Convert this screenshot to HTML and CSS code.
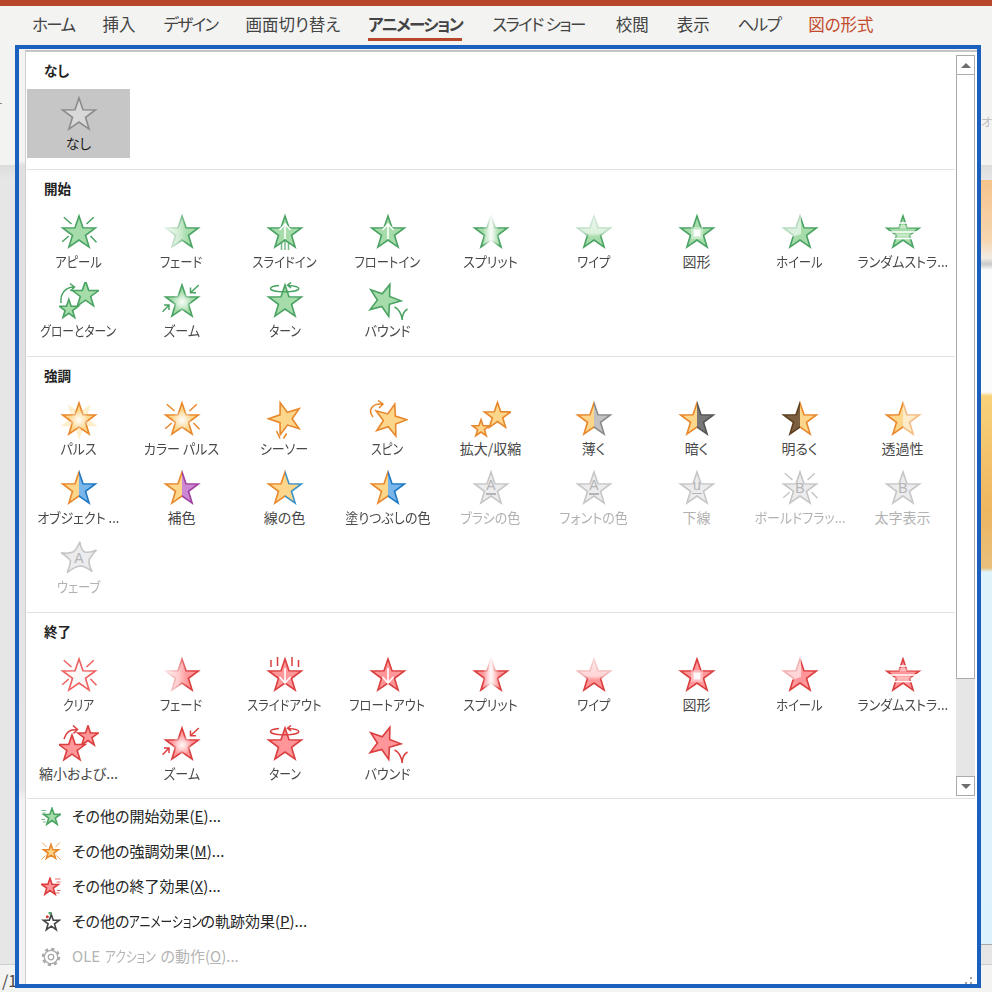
FILE: index.html
```html
<!DOCTYPE html>
<html lang="ja">
<head>
<meta charset="utf-8">
<title>アニメーション</title>
<link rel="stylesheet" href="styles.css">
</head>
<body>
<svg class="defs" aria-hidden="true">
  <defs>
    <polygon id="p" class="pt" points="20,3 24,14.7 36.4,14.9 26.5,22.3 30.1,34.1 20,27 9.900,34.1 13.500,22.3 3.600,14.9 16,14.7"/>
    <clipPath id="clipL"><rect x="0" y="0" width="20" height="40"/></clipPath>
    <clipPath id="clipR"><rect x="20" y="0" width="20" height="40"/></clipPath>
    <linearGradient id="gFade" gradientUnits="userSpaceOnUse" x1="3" y1="0" x2="25" y2="0">
      <stop offset="0" stop-color="#1e1e1e"/><stop offset=".6" stop-color="#777"/><stop offset="1" stop-color="#fff"/>
    </linearGradient>
    <linearGradient id="gSplit" gradientUnits="userSpaceOnUse" x1="12" y1="0" x2="28" y2="0">
      <stop offset="0" stop-color="#fff"/><stop offset=".45" stop-color="#1a1a1a"/><stop offset=".55" stop-color="#1a1a1a"/><stop offset="1" stop-color="#fff"/>
    </linearGradient>
    <linearGradient id="gWipe" gradientUnits="userSpaceOnUse" x1="0" y1="2" x2="0" y2="24">
      <stop offset="0" stop-color="#333"/><stop offset=".82" stop-color="#666"/><stop offset="1" stop-color="#fff"/>
    </linearGradient>
    <radialGradient id="gGlow">
      <stop offset="0" stop-color="#fff" stop-opacity=".95"/><stop offset=".4" stop-color="#fff" stop-opacity=".6"/><stop offset="1" stop-color="#fff" stop-opacity="0"/>
    </radialGradient>
    <mask id="mFade" maskUnits="userSpaceOnUse" x="0" y="0" width="40" height="40"><rect width="40" height="40" fill="url(#gFade)"/></mask>
    <mask id="mSplit" maskUnits="userSpaceOnUse" x="0" y="0" width="40" height="40"><rect width="40" height="40" fill="url(#gSplit)"/></mask>
    <mask id="mWipe" maskUnits="userSpaceOnUse" x="0" y="0" width="40" height="40"><rect width="40" height="40" fill="url(#gWipe)"/></mask>
    <mask id="mWheel" maskUnits="userSpaceOnUse" x="0" y="0" width="40" height="40"><rect width="40" height="40" fill="#fff"/><polygon points="21,21 21,0 0,0 0,28" fill="#666"/></mask>

    <symbol id="i-star" viewBox="0 0 40 40"><use href="#p" class="st"/></symbol>
    <symbol id="i-rays" viewBox="0 0 40 40"><use href="#p" class="st"/><path class="ln" d="M4.800,4.300L12.500,11M34.800,4.300L27.500,11M3.200,28.700L9.800,23M37.500,29.300L31.500,23"/></symbol>
    <symbol id="i-fade" viewBox="0 0 40 40"><g mask="url(#mFade)"><use href="#p" class="st"/></g></symbol>
    <symbol id="i-slidein" viewBox="0 0 40 40"><use href="#p" class="st"/><path class="wl" d="M20,26V11M14.500,17L20,11L25.500,17"/><path class="bar" d="M16.500,30V37M20,28V37M23.500,30V37"/></symbol>
    <symbol id="i-floatin" viewBox="0 0 40 40"><use href="#p" class="st"/><path class="wl" d="M20,26V11M14.500,17L20,11L25.500,17"/></symbol>
    <symbol id="i-split" viewBox="0 0 40 40"><g mask="url(#mSplit)"><use href="#p" class="st"/></g></symbol>
    <symbol id="i-wipe" viewBox="0 0 40 40"><g mask="url(#mWipe)"><use href="#p" class="st"/></g></symbol>
    <symbol id="i-shape" viewBox="0 0 40 40"><use href="#p" class="st"/><rect x="14" y="14" width="12" height="12" class="wa"/><rect x="16.500" y="16.500" width="7" height="7" class="wb"/></symbol>
    <symbol id="i-wheel" viewBox="0 0 40 40"><g mask="url(#mWheel)"><use href="#p" class="st"/></g></symbol>
    <symbol id="i-random" viewBox="0 0 40 40"><use href="#p" class="st"/><path class="wl2" d="M0,10H40M0,19H40M0,25.500H40"/><path class="wl3" d="M0,13.500H40M0,22.200H40"/></symbol>
    <symbol id="i-glowturn" viewBox="0 0 40 40"><use href="#p" class="st" transform="translate(26.500 13) scale(.8) translate(-20 -20.500)"/><use href="#p" class="st" transform="translate(9.800 27.500) scale(.58) translate(-20 -20.500)"/><path class="ln" d="M2,21C1,11 7,5 15,5M11,1.500L15.500,5L11.500,9"/></symbol>
    <symbol id="i-zoom" viewBox="0 0 40 40"><use href="#p" class="st"/><circle cx="20" cy="20" r="10" fill="url(#gGlow)"/><path class="ln" d="M36.800,3L28.500,10.700M28.500,5.500V10.700H34M0.500,29.700L7,23M2,23H7V28"/></symbol>
    <symbol id="i-turn" viewBox="0 0 40 40"><use href="#p" class="st"/><path class="ln" d="M14,3.500C8,4 5.500,5.200 5.500,6.500C5.500,8.400 12,9.800 19.600,9.800C27,9.800 33.800,8.400 33.800,6.500C33.800,5 30,3.800 23,3.400M26,0.500L22.500,3.300L26,6"/></symbol>
    <symbol id="i-bounce" viewBox="0 0 40 40"><use href="#p" class="st" transform="translate(16 18.500) rotate(20) scale(.98) translate(-20 -20.500)"/><path class="ln" d="M26.500,25Q33,28 34.200,38Q34.200,30 39.500,27"/></symbol>
    <symbol id="i-slideout" viewBox="0 0 40 40"><use href="#p" class="st"/><path class="wl" d="M20,12V27M14.500,21L20,27L25.500,21"/><path class="bar2" d="M6,4V11M12.500,1V10M27,1V10M33.500,4V11"/></symbol>
    <symbol id="i-floatout" viewBox="0 0 40 40"><use href="#p" class="st"/><path class="wl" d="M20,12V27M14.500,21L20,27L25.500,21"/></symbol>
    <symbol id="i-shrink" viewBox="0 0 40 40"><use href="#p" class="st" transform="translate(29 11.500) scale(.62) translate(-20 -20.500)"/><use href="#p" class="st" transform="translate(13 24) scale(.8) translate(-20 -20.500)"/><path class="ln" d="M5,14C7,7 11,4 18,5M14,0.500L18.500,4.500L14.500,8.500"/></symbol>

    <symbol id="i-pulse" viewBox="0 0 40 40"><use href="#p" class="halo" transform="translate(20 20.500) rotate(36) scale(1.14) translate(-20 -20.500)"/><use href="#p" class="st"/><circle cx="20" cy="20" r="10" fill="url(#gGlow)"/></symbol>
    <symbol id="i-cpulse" viewBox="0 0 40 40"><use href="#p" class="st"/><circle cx="20" cy="20" r="10" fill="url(#gGlow)"/><path class="ln" d="M4.800,4.300L12.500,11M34.800,4.300L27.500,11M3.200,28.700L9.800,23M37.500,29.300L31.500,23"/></symbol>
    <symbol id="i-teeter" viewBox="0 0 40 40"><use href="#p" class="st" transform="translate(20.500 19) rotate(-18) scale(.98) translate(-20 -20.500)"/><path class="ln" d="M11.500,31L15,38.500M21.500,33.500L18.500,38.500"/></symbol>
    <symbol id="i-spin" viewBox="0 0 40 40"><use href="#p" class="st" transform="translate(22 20.500) rotate(16) scale(.98) translate(-20 -20.500)"/><path class="ln" d="M5,17C-1,10 5,3 14,4M10,0.500L15,4L11,8"/></symbol>
    <symbol id="i-grow" viewBox="0 0 40 40"><use href="#p" class="st" transform="translate(26.500 16.400) scale(.8) translate(-20 -20.500)"/><use href="#p" class="st" transform="translate(10 28.700) scale(.52) translate(-20 -20.500)"/></symbol>
    <symbol id="i-half" viewBox="0 0 40 40"><g clip-path="url(#clipL)"><use href="#p" class="st"/></g><g clip-path="url(#clipR)"><use href="#p" class="st2"/></g></symbol>

    <symbol id="i-brush" viewBox="0 0 40 40"><use href="#p" class="st"/><text class="lt" x="20" y="21" text-anchor="middle">A</text><rect class="lb" x="15" y="24" width="10" height="2"/></symbol>
    <symbol id="i-under" viewBox="0 0 40 40"><use href="#p" class="st"/><text class="lt" x="20" y="21" text-anchor="middle">u</text><rect class="lb" x="15" y="24" width="10" height="1"/></symbol>
    <symbol id="i-bflash" viewBox="0 0 40 40"><use href="#p" class="st"/><text class="lt" x="20" y="24" text-anchor="middle">B</text><path class="ln" d="M4.800,4.300L12.500,11M34.800,4.300L27.500,11M3.200,28.700L9.800,23M37.500,29.300L31.500,23"/></symbol>
    <symbol id="i-bold" viewBox="0 0 40 40"><use href="#p" class="st"/><text class="lt" x="20" y="24" text-anchor="middle">B</text></symbol>
    <symbol id="i-wave" viewBox="0 0 40 40"><path class="st" d="M20.800,3.700Q22,13 26,14Q31,15 37.500,12Q32,18 30,22Q29.500,27 33.200,33.700Q26,28 21,28Q15,29 8.200,34.700Q11,28 11.500,23Q9,19 2.200,14.700Q9,16 14,14Q18,11 20.800,3.700Z"/><text class="lt" x="20" y="25" text-anchor="middle">A</text></symbol>

    <symbol id="i-m-entr" viewBox="0 0 40 40"><use href="#p" class="st" transform="translate(22 20.500) scale(1.02) translate(-20 -20.500)"/><path class="ln" d="M1,7H10M3,12H9M1,25H8M4,30H10"/></symbol>
    <symbol id="i-m-emph" viewBox="0 0 40 40"><use href="#p" class="st" transform="translate(20 20.500) scale(.9) translate(-20 -20.500)"/><path class="ln" d="M2,1L11,10M38,1L29,10M1,35L9,27M39,35L31,27"/></symbol>
    <symbol id="i-m-exit" viewBox="0 0 40 40"><use href="#p" class="st" transform="translate(18 20.500) scale(1.02) translate(-20 -20.500)"/><path class="ln" d="M28,4H39M31,10H39M32,27H39M29,32H37"/></symbol>
    <symbol id="i-m-path" viewBox="0 0 40 40"><use href="#p" class="st" transform="translate(20.600 22) scale(.98) translate(-20 -20.500)"/><circle cx="18" cy="2" r="3" class="dg"/><circle cx="12.600" cy="9.400" r="3" class="dr"/></symbol>
    <symbol id="i-gear" viewBox="0 0 40 40"><circle cx="20" cy="20" r="16" class="gt"/><circle cx="20" cy="20" r="13.500" class="gb"/><circle cx="20" cy="20" r="5.500" class="gh"/></symbol>
  </defs>
</svg>

<div class="accent"></div>
<nav class="tabs">
  <span class="tab kana">ホーム</span>
  <span class="tab">挿入</span>
  <span class="tab kana">デザイン</span>
  <span class="tab">画面切り替え</span>
  <span class="tab kana active">アニメーション</span>
  <span class="tab kana spaced">スライド ショー</span>
  <span class="tab">校閲</span>
  <span class="tab">表示</span>
  <span class="tab kana">ヘルプ</span>
  <span class="tab context">図の形式</span>
</nav>
<div class="ribbon"><span class="ribbon-tick"></span><span class="ribbon-cut">オ</span></div>
<div class="workspace"><div class="slide"></div></div>
<div class="status">/1</div>

<div class="frame">
  <div class="menu">
    <div class="gallery-row">
      <div class="gallery">
        <section class="group">
          <h3 class="group-title">なし</h3>
          <div class="grid">
            <div class="tile selected"><svg class="ico n"><use href="#i-star"/></svg><span class="label">なし</span></div>
          </div>
        </section>
        <section class="group">
          <h3 class="group-title">開始</h3>
          <div class="grid">
            <div class="tile"><svg class="ico g"><use href="#i-rays"/></svg><span class="label nar">アピール</span></div>
            <div class="tile"><svg class="ico g"><use href="#i-fade"/></svg><span class="label nar">フェード</span></div>
            <div class="tile"><svg class="ico g"><use href="#i-slidein"/></svg><span class="label nar">スライドイン</span></div>
            <div class="tile"><svg class="ico g"><use href="#i-floatin"/></svg><span class="label nar">フロートイン</span></div>
            <div class="tile"><svg class="ico g"><use href="#i-split"/></svg><span class="label wid">スプリット</span></div>
            <div class="tile"><svg class="ico g"><use href="#i-wipe"/></svg><span class="label nar">ワイプ</span></div>
            <div class="tile"><svg class="ico g"><use href="#i-shape"/></svg><span class="label">図形</span></div>
            <div class="tile"><svg class="ico g"><use href="#i-wheel"/></svg><span class="label nar">ホイール</span></div>
            <div class="tile"><svg class="ico g"><use href="#i-random"/></svg><span class="label wid">ランダムストラ...</span></div>
            <div class="tile"><svg class="ico g"><use href="#i-glowturn"/></svg><span class="label tig">グローとターン</span></div>
            <div class="tile"><svg class="ico g"><use href="#i-zoom"/></svg><span class="label wid">ズーム</span></div>
            <div class="tile"><svg class="ico g"><use href="#i-turn"/></svg><span class="label tig">ターン</span></div>
            <div class="tile"><svg class="ico g"><use href="#i-bounce"/></svg><span class="label wid">バウンド</span></div>
          </div>
        </section>
        <section class="group">
          <h3 class="group-title">強調</h3>
          <div class="grid">
            <div class="tile"><svg class="ico o"><use href="#i-pulse"/></svg><span class="label wid">パルス</span></div>
            <div class="tile"><svg class="ico o"><use href="#i-cpulse"/></svg><span class="label wid">カラー パルス</span></div>
            <div class="tile"><svg class="ico o"><use href="#i-teeter"/></svg><span class="label wid">シーソー</span></div>
            <div class="tile"><svg class="ico o"><use href="#i-spin"/></svg><span class="label tig">スピン</span></div>
            <div class="tile"><svg class="ico o"><use href="#i-grow"/></svg><span class="label">拡大/収縮</span></div>
            <div class="tile"><svg class="ico o h-gray"><use href="#i-half"/></svg><span class="label">薄く</span></div>
            <div class="tile"><svg class="ico o h-dark"><use href="#i-half"/></svg><span class="label">暗く</span></div>
            <div class="tile"><svg class="ico o h-brown"><use href="#i-half"/></svg><span class="label">明るく</span></div>
            <div class="tile"><svg class="ico o h-pale"><use href="#i-half"/></svg><span class="label">透過性</span></div>
            <div class="tile"><svg class="ico o h-blue"><use href="#i-half"/></svg><span class="label wid">オブジェクト ...</span></div>
            <div class="tile"><svg class="ico o h-purple"><use href="#i-half"/></svg><span class="label">補色</span></div>
            <div class="tile"><svg class="ico o h-line"><use href="#i-half"/></svg><span class="label">線の色</span></div>
            <div class="tile"><svg class="ico o h-blue"><use href="#i-half"/></svg><span class="label wid">塗りつぶしの色</span></div>
            <div class="tile off"><svg class="ico d"><use href="#i-brush"/></svg><span class="label wid">ブラシの色</span></div>
            <div class="tile off"><svg class="ico d"><use href="#i-brush"/></svg><span class="label wid">フォントの色</span></div>
            <div class="tile off"><svg class="ico d"><use href="#i-under"/></svg><span class="label">下線</span></div>
            <div class="tile off"><svg class="ico d"><use href="#i-bflash"/></svg><span class="label wid">ボールドフラッ...</span></div>
            <div class="tile off"><svg class="ico d"><use href="#i-bold"/></svg><span class="label">太字表示</span></div>
            <div class="tile off"><svg class="ico d"><use href="#i-wave"/></svg><span class="label nar">ウェーブ</span></div>
          </div>
        </section>
        <section class="group last">
          <h3 class="group-title">終了</h3>
          <div class="grid">
            <div class="tile"><svg class="ico r clear"><use href="#i-rays"/></svg><span class="label tig">クリア</span></div>
            <div class="tile"><svg class="ico r"><use href="#i-fade"/></svg><span class="label nar">フェード</span></div>
            <div class="tile"><svg class="ico r"><use href="#i-slideout"/></svg><span class="label nar">スライドアウト</span></div>
            <div class="tile"><svg class="ico r"><use href="#i-floatout"/></svg><span class="label nar">フロートアウト</span></div>
            <div class="tile"><svg class="ico r"><use href="#i-split"/></svg><span class="label wid">スプリット</span></div>
            <div class="tile"><svg class="ico r"><use href="#i-wipe"/></svg><span class="label nar">ワイプ</span></div>
            <div class="tile"><svg class="ico r"><use href="#i-shape"/></svg><span class="label">図形</span></div>
            <div class="tile"><svg class="ico r"><use href="#i-wheel"/></svg><span class="label nar">ホイール</span></div>
            <div class="tile"><svg class="ico r"><use href="#i-random"/></svg><span class="label wid">ランダムストラ...</span></div>
            <div class="tile"><svg class="ico r"><use href="#i-shrink"/></svg><span class="label">縮小および...</span></div>
            <div class="tile"><svg class="ico r"><use href="#i-zoom"/></svg><span class="label wid">ズーム</span></div>
            <div class="tile"><svg class="ico r"><use href="#i-turn"/></svg><span class="label tig">ターン</span></div>
            <div class="tile"><svg class="ico r"><use href="#i-bounce"/></svg><span class="label wid">バウンド</span></div>
          </div>
        </section>
      </div>
      <div class="scrollbar">
        <div class="sb-btn"><span class="tri up"></span></div>
        <div class="sb-thumb"></div>
        <div class="sb-track"></div>
        <div class="sb-btn"><span class="tri down"></span></div>
      </div>
    </div>
    <ul class="more">
      <li class="more-item"><svg class="mi g"><use href="#i-m-entr"/></svg><span>その他の開始効果(<u>E</u>)...</span></li>
      <li class="more-item"><svg class="mi o"><use href="#i-m-emph"/></svg><span>その他の強調効果(<u>M</u>)...</span></li>
      <li class="more-item"><svg class="mi r"><use href="#i-m-exit"/></svg><span>その他の終了効果(<u>X</u>)...</span></li>
      <li class="more-item"><svg class="mi k"><use href="#i-m-path"/></svg><span>その他の<span class="kn anim">アニメーション</span>の軌跡効果(<u>P</u>)...</span></li>
      <li class="more-item off"><svg class="mi"><use href="#i-gear"/></svg><span>OLE <span class="kn act">アクション</span>の動作(<u>O</u>)...</span></li>
    </ul>
    <svg class="grip" viewBox="0 0 7 7"><rect x="5" y="0" width="2" height="2"/><rect x="0" y="5" width="2" height="2"/><rect x="5" y="5" width="2" height="2"/></svg>
  </div>
</div>
</body>
</html>
```

FILE: styles.css
```css
* { box-sizing: border-box; }
html, body { margin: 0; padding: 0; }
body {
  width: 992px;
  height: 992px;
  overflow: hidden;
  position: relative;
  background: #f3f3f2;
  font-family: "Noto Sans CJK JP", "Noto Sans", sans-serif;
  font-feature-settings: "palt";
  color: #444;
}
.defs { position: absolute; width: 0; height: 0; }

.accent { height: 6px; background: #b7472a; }
.tabs {
  height: 39px;
  display: flex;
  gap: 28px;
  padding: 8px 0 0 32px;
  font-size: 16.5px;
  line-height: 20px;
  color: #444;
}
.tab { padding-bottom: 4px; height: 27px; border-bottom: 3px solid transparent; white-space: nowrap; }
.tab.kana { letter-spacing: -1.6px; }
.tab.spaced { margin-left: 2px; margin-right: 3px; word-spacing: 1px; }
.tab.active { font-weight: 700; border-bottom-color: #b7472a; }
.tab.context { color: #c4492b; }

.ribbon {
  height: 120px;
  display: flex;
  justify-content: space-between;
  align-items: flex-start;
}
.ribbon-tick { width: 2px; height: 1px; margin-top: 58px; background: #888; }
.ribbon-cut { margin-top: 67px; font-size: 12px; line-height: 20px; color: #bdbdbd; }

.workspace {
  height: 800px;
  padding: 15px 0 19px 100px;
  background: linear-gradient(#dcdcdc, #e6e6e6 14px);
  border-bottom: 1px solid #cfcfcf;
}
.slide {
  height: 100%;
  border-bottom: 1px solid #a8a8a8;
  background: linear-gradient(#f6c48c 0, #f7d6b0 60px, #f3ece4 78px, #c9c9c9 84px, #fbfbfb 90px, #fbfbfb 212px, #f9d27a 216px, #eeb65f 330px, #e9c07c 388px, #dff3fb 392px, #dcf2fc 100%);
}
.status { height: 27px; padding: 5px 0 0 2px; font-size: 16px; line-height: 20px; color: #444; }

.frame {
  position: absolute;
  left: 15px;
  top: 45px;
  width: 966px;
  height: 943px;
  border: 4px solid #1c60bf;
  padding: 1px 0 0 6px;
  background: linear-gradient(#f3f3f2 112px, #e0e0e0 116px, #e6e6e6 740px, #f2f2f2 750px);
}
.menu {
  position: relative;
  height: 100%;
  background: #fff;
  border-top: 2px solid #c6c6c6;
  border-left: 1px solid #cfcfcf;
  display: flex;
  flex-direction: column;
}
.gallery-row {
  height: 747px;
  flex: none;
  display: flex;
  align-items: flex-start;
  border-bottom: 1px solid #e1e1e1;
  margin-left: 1px;
  margin-right: 2px;
}
.gallery { width: 928px; height: 746px; overflow: hidden; flex: none; }
.group { padding-bottom: 11px; border-bottom: 1px solid #e1e1e1; }
.group.last { padding-bottom: 0; border-bottom: 0; }
.group-title {
  margin: 0;
  height: 37px;
  padding-left: 17px;
  font-size: 13.5px;
  line-height: 36px;
  font-weight: 700;
  color: #222;
}
.grid { display: grid; grid-template-columns: repeat(9, 103px); grid-auto-rows: 69px; }
.tile { display: flex; flex-direction: column; align-items: center; padding-top: 6px; }
.tile.selected { background: #c6c6c6; }
.tile.selected .label { color: #222; }
.label {
  font-size: 14px;
  line-height: 16px;
  height: 18px;
  white-space: nowrap;
  color: #484848;
}
.label.wid { transform: scaleX(.93); }
.label.nar { transform: scaleX(.88); }
.label.tig { transform: scaleX(.84); }
.tile.off .label { color: #b2b2b2; }

.ico { display: block; width: 40px; height: 40px; flex: none; overflow: visible; }
.mi { display: block; width: 20px; height: 20px; flex: none; overflow: visible; }

.g { --f: #a6dcaa; --s: #4aa363; }
.o { --f: #fcd68a; --s: #e8872b; }
.r { --f: #ff979a; --s: #db3e3e; }
.r.clear { --f: #faf7f7; --s: #ef6060; }
.d { --f: #ecebee; --s: #c6c6c6; }
.n { --f: #d9d9d9; --s: #8c8c8c; }
.k { --f: #fff; --s: #444; }
.h-gray { --f2: #c2c2c2; --s2: #8a8a8a; }
.h-dark { --f2: #787878; --s2: #555; }
.h-brown { --f: #7c6040; --s: #5e4020; --f2: #fcd68a; --s2: #e8872b; }
.h-pale { --f2: #fdecc9; --s2: #f5bb82; }
.h-blue { --f2: #7ab6ea; --s2: #1f78c4; }
.h-purple { --f2: #cc88d2; --s2: #a040a0; }
.h-line { --f2: #fcd68a; --s2: #3a92c8; }

.pt { vector-effect: non-scaling-stroke; stroke-linejoin: miter; stroke-miterlimit: 10; }
.st { fill: var(--f); stroke: var(--s); stroke-width: 1.6; }
.st2 { fill: var(--f2); stroke: var(--s2); stroke-width: 1.6; }
.halo { fill: #fdefcc; stroke: none; }
.ln { fill: none; stroke: var(--s); stroke-width: 1.5; }
.mi .ln { stroke-width: 2.6; }
.wl { fill: none; stroke: #fff; stroke-width: 1.6; }
.wl2 { fill: none; stroke: #fff; stroke-width: 1.4; }
.wl3 { fill: none; stroke: #fff; stroke-width: 3; opacity: .35; }
.wa { fill: #fff; opacity: .35; }
.wb { fill: #fff; opacity: .9; }
.bar { fill: none; stroke: var(--s); stroke-width: 1.5; opacity: .75; }
.bar2 { fill: none; stroke: var(--s); stroke-width: 1.5; }
.lt { font-family: "Liberation Sans", sans-serif; font-size: 14px; fill: #b4b4b4; }
.lb { fill: #b4b4b4; }
.dg { fill: #4aa363; }
.dr { fill: #db3e3e; }
.gt { fill: none; stroke: #a8a8a8; stroke-width: 5; stroke-dasharray: 6.300 6.270; }
.gb { fill: #fff; stroke: #a8a8a8; stroke-width: 2.500; }
.gh { fill: #fff; stroke: #a8a8a8; stroke-width: 2.500; }

.scrollbar {
  width: 19px;
  height: 741px;
  flex: none;
  margin: 3px 0 0 1px;
  display: flex;
  flex-direction: column;
}
.sb-btn {
  height: 20px;
  flex: none;
  background: #fff;
  border: 1px solid #ababab;
  display: flex;
  align-items: center;
  justify-content: center;
}
.sb-thumb { height: 604px; flex: none; background: #fff; border: 1px solid #ababab; border-top: 0; }
.sb-track { flex: 1; background: #e6e6e6; }
.tri { width: 0; height: 0; border-left: 5px solid transparent; border-right: 5px solid transparent; }
.tri.up { border-bottom: 5px solid #6e6e6e; }
.tri.down { border-top: 5px solid #6e6e6e; }

.more { list-style: none; margin: 0; padding: 0; }
.more-item {
  height: 35px;
  display: flex;
  align-items: center;
  gap: 11px;
  padding: 0 0 0 15px;
  font-size: 15px;
  line-height: 20px;
  color: #262626;
}
.more-item > span { margin-top: -1px; }
.kn { display: inline-block; white-space: nowrap; transform-origin: left center; }
.kn.anim { width: 71px; transform: scaleX(.78); }
.kn.act { width: 55px; margin-left: 2px; transform: scaleX(.78); }
.more-item.off { color: #b4b4b4; }
.grip { position: absolute; right: 5px; bottom: 0; width: 7px; height: 7px; fill: #a0a0a0; }
```
